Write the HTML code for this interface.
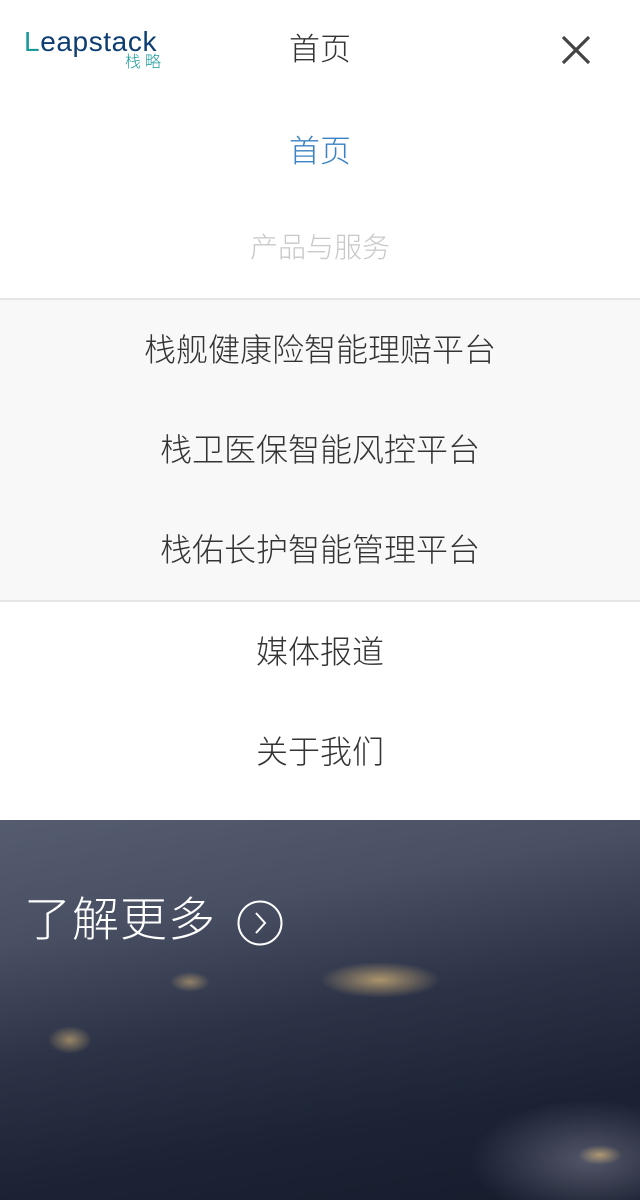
<!DOCTYPE html>
<html><head><meta charset="utf-8"><style>
*{margin:0;padding:0;box-sizing:border-box}
body{width:640px;height:1200px;overflow:hidden;background:#fff;font-family:"Liberation Sans","Noto Sans CJK SC",sans-serif;font-weight:300}
.hdr{height:100px;position:relative}
.logo{position:absolute;left:24px;top:27px;font-size:28px;color:#0d3d72;font-weight:400;letter-spacing:0.6px;line-height:30px}
.logo b{color:#1a9a9a;font-weight:400}
.logo2{position:absolute;left:125px;top:54px;font-size:16px;color:#1a9a9a;letter-spacing:4px;line-height:18px}
.title{position:absolute;left:0;right:0;top:30px;text-align:center;font-size:31px;color:#333;line-height:40px}
.close{position:absolute;left:560px;top:34px}
.item{height:100px;line-height:100px;text-align:center;font-size:32px;color:#333}
.gray{background:#f8f8f8;border-top:2px solid #e6e6e6;border-bottom:2px solid #e6e6e6}
.hero{position:absolute;top:820px;left:0;width:640px;height:380px;background:
radial-gradient(ellipse 60px 18px at 380px 160px,rgba(255,210,130,.6),transparent),
radial-gradient(ellipse 22px 14px at 70px 220px,rgba(255,210,130,.5),transparent),
radial-gradient(ellipse 22px 10px at 600px 335px,rgba(255,210,130,.55),transparent),
radial-gradient(ellipse 20px 10px at 190px 162px,rgba(255,210,130,.45),transparent),
radial-gradient(ellipse 120px 60px at 590px 340px,rgba(140,140,160,.5),transparent),
linear-gradient(170deg,#555c70 0%,#4a5064 25%,#2c3346 50%,#1c2335 75%,#151c2c 100%)}
.more{position:absolute;left:24px;top:68px;font-size:47px;color:#fff;line-height:64px;letter-spacing:1px}
.circ{position:absolute;left:237px;top:80px}
</style></head><body>
<div class="hdr">
<div class="logo"><b>L</b>eapstack</div>
<div class="logo2">栈略</div>
<div class="title">首页</div>
<svg class="close" width="32" height="32" viewBox="0 0 32 32"><path d="M3 3L29 29M29 3L3 29" stroke="#444" stroke-width="3.2"/></svg>
</div>
<div class="item" style="color:#3b82c4;margin-top:2px;height:96px;font-size:31px">首页</div>
<div class="item" style="color:#c8c8c8;font-size:28px">产品与服务</div>
<div class="gray">
<div class="item">栈舰健康险智能理赔平台</div>
<div class="item">栈卫医保智能风控平台</div>
<div class="item">栈佑长护智能管理平台</div>
</div>
<div class="item">媒体报道</div>
<div class="item">关于我们</div>
<div class="hero">
<div class="more">了解更多</div>
<svg class="circ" width="48" height="48" viewBox="0 0 48 48"><circle cx="23" cy="23" r="21.5" fill="none" stroke="#fff" stroke-width="2"/><path d="M19 13L28 23L19 33" fill="none" stroke="#fff" stroke-width="2"/></svg>
</div>
</body></html>
